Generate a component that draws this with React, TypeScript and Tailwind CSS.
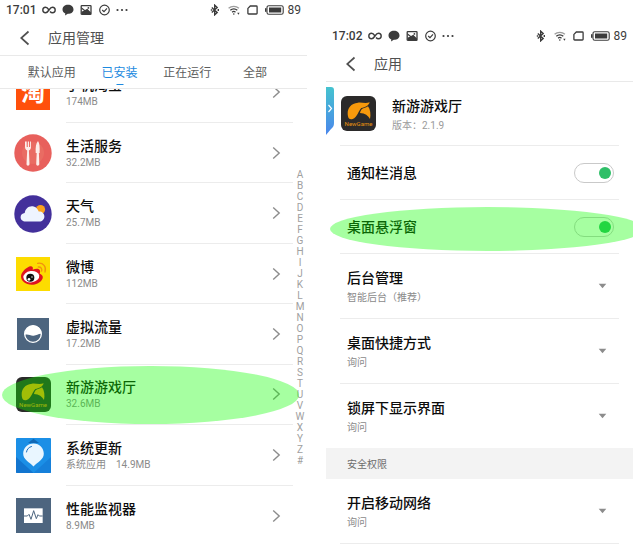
import type { ReactNode } from "react";

const FONT = "font-['Roboto','Noto_Sans_CJK_SC',sans-serif]";

function StatusBar({ time }: { time: string }) {
  return (
    <div className="flex h-5 items-center justify-between px-1.5 text-[12px] leading-5 text-[#3c3c3c]">
      <div className="flex items-center gap-1.5">
        <span className="w-[30px] font-medium">{time}</span>
        <svg width="14" height="10" viewBox="0 0 14 10" fill="none" stroke="currentColor" strokeWidth="1.4">
          <path d="M7 5C5.800 3.200 4.900 2.200 3.600 2.200a2.800 2.800 0 0 0 0 5.600C5 7.800 5.900 6.700 7 5s2-2.800 3.400-2.800a2.800 2.800 0 0 1 0 5.600c-1 0-1.700-.5-2.400-1.300" />
        </svg>
        <svg width="12" height="12" viewBox="0 0 12 12" fill="currentColor">
          <path d="M6 .8C2.900.8.5 2.800.5 5.400.5 7.200 1.600 8.700 3.300 9.400L3 11.600l2.800-1.800H6c3.100 0 5.500-1.900 5.500-4.400S9.100.8 6 .8Z" />
        </svg>
        <svg width="12" height="12" viewBox="0 0 12 12">
          <rect x="1.200" y="1.700" width="9.800" height="8.600" rx=".6" fill="none" stroke="currentColor" strokeWidth="1.300" />
          <path d="M1.500 3.200 5 6l2.300-1.200L11 8.500V10H1.500V7.800L4 6.600 1.500 5Z" fill="currentColor" />
          <circle cx="8.400" cy="3.900" r=".9" fill="currentColor" />
        </svg>
        <svg width="12" height="12" viewBox="0 0 12 12" fill="none" stroke="currentColor" strokeWidth="1.200">
          <circle cx="6.500" cy="6" r="4.800" />
          <path d="m4.200 6 1.800 1.700 3-3.300" />
        </svg>
        <svg width="12" height="12" viewBox="0 0 12 12" fill="currentColor">
          <circle cx="1.500" cy="6" r="1.100" />
          <circle cx="6" cy="6" r="1.100" />
          <circle cx="10.500" cy="6" r="1.100" />
        </svg>
      </div>
      <div className="flex items-center gap-[7px]">
        <svg width="11" height="12" viewBox="0 0 11 12" fill="none" stroke="currentColor" strokeWidth="1.400">
          <path d="m1.800 3.400 5.400 5L4.700 10.800V1.200l2.500 2.400-5.400 5" />
          <path d="M8.300 4.900v2.200M.8 6h1.400" />
        </svg>
        <svg width="12" height="12" viewBox="0 0 12 12" fill="none" stroke="currentColor" strokeWidth="1.300">
          <path d="M.6 4.300C3.500 1.600 8 1.600 10.900 4.300" opacity=".5" />
          <path d="M2.300 6.300c2-1.800 5-1.800 7 0" />
          <path d="M4.100 8.200c1-.9 2.400-.9 3.400 0" />
          <circle cx="5.800" cy="10" r=".8" fill="currentColor" stroke="none" />
          <path d="m9.200 8.800 1.200 1.900 1.200-1.900Z" fill="currentColor" stroke="none" />
        </svg>
        <svg width="11" height="12" viewBox="0 0 11 12" fill="none" stroke="currentColor" strokeWidth="1.300">
          <path d="M3.300 2h6c.5 0 .8.3.8.8v6.400c0 .5-.3.8-.8.8H1.700c-.5 0-.8-.3-.8-.8V4.400Z" />
        </svg>
        <div className="flex items-center gap-1">
          <svg width="19" height="12" viewBox="0 0 19 12">
            <rect x="2" y="1.700" width="16.200" height="8.600" rx="1.800" fill="none" stroke="currentColor" strokeWidth="1.100" />
            <rect x="4" y="3.500" width="12.200" height="5" fill="currentColor" />
            <rect x="0" y="4.200" width="1.500" height="3.600" fill="currentColor" />
          </svg>
          <span>89</span>
        </div>
      </div>
    </div>
  );
}

function TitleBar({ title }: { title: string }) {
  return (
    <header className="flex h-9 items-center gap-4 border-b border-[#e9e9e9] pl-5 text-[#505050]">
      <button type="button" aria-label="返回" className="w-3">
        <svg width="12" height="16" viewBox="0 0 12 16" fill="none" stroke="currentColor" strokeWidth="1.700">
          <path d="M8.500 1.500 1.200 8l7.300 6.500" />
        </svg>
      </button>
      <h1 className="text-[14px] leading-5">{title}</h1>
    </header>
  );
}

function NewGameIcon() {
  return (
    <div className="flex size-[35px] flex-col items-center rounded-md bg-[#2b2a2a] pt-1.5">
      <svg width="24" height="18" viewBox="19 18 72 54" className="shrink-0">
        <g fill="#f7990c">
          <path d="M22 61C18 43 26 22 52 20c12-1 23 3 35-1-3 11-14 15-25 17-9 9-12 28-26 33-8 2-13-1-14-8Z" />
          <path d="M65 38c7-2 13-4 17-7 7 9 9 24 6 38-5-10-15-17-30-18 1-5 3-10 7-13Z" />
        </g>
      </svg>
      <span className="text-[6px] leading-2 text-[#e8920f]">NewGame</span>
    </div>
  );
}

function TaobaoIcon() {
  return (
    <div className="flex size-[34px] items-center justify-center bg-[#ff500b] text-[24px] leading-8 font-bold text-white">
      淘
    </div>
  );
}

function LifeIcon() {
  return (
    <svg width="38" height="38" viewBox="0 0 38 38">
      <circle cx="19" cy="19" r="18.700" fill="#e8605c" />
      <circle cx="19" cy="19" r="11" fill="#ea7568" opacity=".6" />
      <path
        d="M11 7.500v5.500c0 2 1 3 2.200 3.500L12.500 30c0 2.200 3 2.200 3 0l-.6-13.500c1.200-.5 2.100-1.500 2.100-3.500V7.500h-.9V13h-1.100V7.500h-1.200V13h-1.100V7.500Z"
        fill="#fdeeea"
      />
      <path d="M24 7c-2 2-2.600 6-2.300 12h1L22.200 30c0 2.200 3.100 2.200 3.100 0l-.4-11h.7C25.900 13 25.600 9 24 7Z" fill="#fdeeea" />
    </svg>
  );
}

function WeatherIcon() {
  return (
    <svg width="38" height="38" viewBox="0 0 38 38">
      <circle cx="19" cy="19" r="18.700" fill="#43309b" />
      <circle cx="26.500" cy="14.500" r="4.600" fill="#f9a11d" />
      <path
        d="M11.500 26.500C8.700 26.500 6.600 24.600 6.600 22.200c0-2.300 1.800-4 4.100-4.200.5-3.900 3.400-6.800 7.100-6.800 3.300 0 5.900 2.200 6.900 5.400 3.200-.3 5.700 1.900 5.700 4.900 0 2.900-2.200 5-5 5Z"
        fill="#eef4ff"
      />
    </svg>
  );
}

function WeiboIcon() {
  return (
    <svg width="34" height="34" viewBox="0 0 102 102">
      <rect width="102" height="102" fill="#fddc00" />
      <path
        d="M15 58c0-12 18-29 29-30 6 0 8 4 6 10 9-4 20-5 22 3 1 3 0 6-1 9 22 8 2 33-24 33-18 0-32-10-32-25Z"
        fill="#df1420"
      />
      <ellipse cx="46" cy="59" rx="24" ry="17" fill="#fff" transform="rotate(-8 46 59)" />
      <circle cx="43" cy="62" r="12" fill="#111" />
      <circle cx="39" cy="67" r="4" fill="#fff" />
      <circle cx="48" cy="60" r="2" fill="#fff" />
      <path d="M65 19c17-3 27 11 22 26M67 30c8-1 12 6 10 12" fill="none" stroke="#f2930e" strokeWidth="4" strokeLinecap="round" />
    </svg>
  );
}

function DataIcon() {
  return (
    <svg width="32" height="32" viewBox="0 0 96 96">
      <rect width="96" height="96" fill="#4d657f" />
      <circle cx="48" cy="48" r="25" fill="none" stroke="#fff" strokeWidth="4" />
      <path d="M23 51c10-4 17 3 27 2 9-1 15-7 23-6C73 14 23 14 23 51Z" fill="#fff" />
    </svg>
  );
}

function UpdateIcon() {
  return (
    <svg width="35" height="35" viewBox="0 0 35 35">
      <rect width="35" height="35" rx="1" fill="#1b8fe6" />
      <path d="M0 19 17.500 35H1a1 1 0 0 1-1-1Z" fill="#1275cf" />
      <path d="M35 19 17.500 35H34a1 1 0 0 0 1-1Z" fill="#1680da" />
      <path d="M12 5 17.500.8 23 5Z" fill="#1168b5" />
      <path d="M17.500 5.500c6 0 10.300 4.500 10.300 10.300 0 5.700-5.800 8.200-10.300 12.700-4.500-4.500-10.300-7-10.300-12.700C7.200 10 11.500 5.500 17.500 5.500Z" fill="#e9f6ff" />
      <path d="M10.500 14c.5-2.800 2.200-4.800 5-5.500" fill="none" stroke="#1b6fc0" strokeWidth="1" strokeLinecap="round" />
    </svg>
  );
}

function MonitorIcon() {
  return (
    <svg width="35" height="35" viewBox="0 0 105 105">
      <rect width="105" height="105" fill="#4d657f" />
      <rect x="24" y="31" width="56" height="44" fill="#fff" />
      <path d="M24 54h10l5-5 6 15 8-26 8 24 5-12 4 4h10" fill="none" stroke="#4d657f" strokeWidth="3" />
    </svg>
  );
}

type AppItem = { name: string; size: string; kind?: string; icon: ReactNode; marked?: boolean };

const apps: AppItem[] = [
  { name: "生活服务", size: "32.2MB", icon: <LifeIcon /> },
  { name: "天气", size: "25.7MB", icon: <WeatherIcon /> },
  { name: "微博", size: "112MB", icon: <WeiboIcon /> },
  { name: "虚拟流量", size: "17.2MB", icon: <DataIcon /> },
  { name: "新游游戏厅", size: "32.6MB", icon: <NewGameIcon />, marked: true },
  { name: "系统更新", size: "14.9MB", kind: "系统应用", icon: <UpdateIcon /> },
  { name: "性能监视器", size: "8.9MB", icon: <MonitorIcon /> },
];

function AppRow({ app, last }: { app: AppItem; last?: boolean }) {
  return (
    <button type="button" className="flex min-h-15 w-full flex-1 items-stretch text-left">
      <span className="flex w-[66px] shrink-0 items-center justify-center">{app.icon}</span>
      <span
        className={
          last
            ? "flex flex-1 items-center justify-between pr-3"
            : "flex flex-1 items-center justify-between border-b border-[#ececec] pr-3"
        }
      >
        <span className="flex flex-col pt-0.5">
          <span className="text-[14px] leading-[18px] font-medium text-[#0c0c0c]">{app.name}</span>
          <span className="flex gap-2.5 text-[10px] leading-4 text-[#8a8a8a]">
            {app.kind && <span>{app.kind}</span>}
            <span>{app.size}</span>
          </span>
        </span>
        <svg width="9" height="14" viewBox="0 0 9 14" fill="none" stroke="#8c8c8c" strokeWidth="1.400">
          <path d="m1.200 1.500 6 5.500-6 5.500" />
        </svg>
      </span>
    </button>
  );
}

const tabs = ["默认应用", "已安装", "正在运行", "全部"];
const letters = "ABCDEFGHIJKLMNOPQRSTUVWXYZ#".split("");

function ManagerScreen() {
  return (
    <section className="flex min-h-screen flex-col">
      <StatusBar time="17:01" />
      <TitleBar title="应用管理" />
      <nav className="grid h-[33px] grid-cols-4 border-b border-[#e9e9e9] px-[18px] text-[12px] leading-5">
        {tabs.map((tab) =>
          tab === "已安装" ? (
            <button key={tab} type="button" className="relative pt-0.5 text-[#1c8ae0]">
              {tab}
              <span className="absolute bottom-[3px] left-1/2 h-px w-[7px] -translate-x-1/2 bg-[#1c8ae0]" />
            </button>
          ) : (
            <button key={tab} type="button" className="pt-0.5 text-[#5c5c5c]">
              {tab}
            </button>
          ),
        )}
      </nav>
      <div className="flex flex-1">
        <div className="flex flex-1 flex-col">
          <div className="flex h-[34px] flex-col justify-end overflow-hidden">
            <div className="flex h-[61px] shrink-0 flex-col">
              <AppRow app={{ name: "手机淘宝", size: "174MB", icon: <TaobaoIcon /> }} />
            </div>
          </div>
          {apps.map((app, index) => (
            <div key={app.name} className="relative flex flex-1 flex-col">
              <AppRow app={app} last={index === apps.length - 1} />
              {app.marked && (
                <span className="pointer-events-none absolute inset-y-px -right-1.5 left-0.5 rounded-[50%] bg-[rgba(13,255,0,0.37)]" />
              )}
            </div>
          ))}
        </div>
        <ol className="w-[14px] pt-20 text-center text-[10px] leading-[11px] text-[#a0a0a0]">
          {letters.map((letter) => (
            <li key={letter}>{letter}</li>
          ))}
        </ol>
      </div>
    </section>
  );
}

function SwitchRow({ label, marked }: { label: string; marked?: boolean }) {
  return (
    <div className="relative px-[14px]">
      <label className="flex h-[54px] items-center justify-between border-b border-[#ececec] pr-[5px] pl-[7px]">
        <span className="text-[14px] leading-5 font-medium text-[#0c0c0c]">{label}</span>
        <input
          type="checkbox"
          role="switch"
          defaultChecked
          className="h-5 w-10 appearance-none rounded-full border border-[#c9c9c9] bg-white outline-none before:mt-[3px] before:ml-1 before:block before:size-3 before:rounded-full before:bg-[#bdbdbd] checked:before:ml-6 checked:before:bg-[#2fbf68]"
        />
      </label>
      {marked && (
        <span className="pointer-events-none absolute inset-0 overflow-hidden">
          <span className="absolute top-[7px] -right-[11px] bottom-[3px] left-1 rounded-[50%] bg-[rgba(13,255,0,0.37)]" />
        </span>
      )}
    </div>
  );
}

function SelectRow({ id, label, value, options, last }: { id: string; label: string; value: string; options: string[]; last?: boolean }) {
  return (
    <div className="px-[14px]">
      <div className={last ? "flex h-16 items-center pr-3 pl-[7px]" : "flex h-[65px] items-center border-b border-[#ececec] pr-3 pl-[7px]"}>
        <div className="flex flex-1 flex-col pt-1">
          <label htmlFor={id} className="text-[14px] leading-5 font-medium text-[#0c0c0c]">
            {label}
          </label>
          <select id={id} defaultValue={value} className="h-5 w-full appearance-none bg-transparent p-0 text-[10px] leading-5 text-[#8a8a8a]">
            {options.map((option) => (
              <option key={option}>{option}</option>
            ))}
          </select>
        </div>
        <svg width="9" height="6" viewBox="0 0 9 6" fill="#8c8c8c">
          <path d="M.7.8h7.600L4.500 5.200Z" />
        </svg>
      </div>
    </div>
  );
}

const askOptions = ["询问", "允许", "禁止"];

function DetailScreen() {
  return (
    <section className="pt-[26px]">
      <StatusBar time="17:02" />
      <TitleBar title="应用" />
      <div className="relative px-[14px]">
        <button type="button" aria-label="展开侧栏" className="absolute top-[5px] left-0">
          <svg width="8" height="48" viewBox="0 0 8 48" className="block">
            <defs>
              <linearGradient id="side" x1="0" y1="0" x2="0" y2="1">
                <stop offset="0" stopColor="#45c3cf" />
                <stop offset="1" stopColor="#4a86ec" />
              </linearGradient>
            </defs>
            <path d="M0 0h5a3 3 0 0 1 3 3v33c0 3-1 4-3 6l-5 6Z" fill="url(#side)" />
            <path d="m2.500 18 3 3.500-3 3.500" fill="none" stroke="#fff" strokeWidth="1.200" />
          </svg>
        </button>
        <div className="flex h-16 items-center gap-4 border-b border-[#ececec] pl-px">
          <NewGameIcon />
          <div className="pt-1">
            <h2 className="text-[14px] leading-5 font-medium text-[#0c0c0c]">新游游戏厅</h2>
            <p className="text-[10px] leading-5 text-[#9a9a9a]">版本：2.1.9</p>
          </div>
        </div>
      </div>
      <SwitchRow label="通知栏消息" />
      <SwitchRow label="桌面悬浮窗" marked />
      <SelectRow id="background" label="后台管理" value="智能后台（推荐）" options={["智能后台（推荐）", "允许后台运行", "禁止后台运行"]} />
      <SelectRow id="shortcut" label="桌面快捷方式" value="询问" options={askOptions} />
      <SelectRow id="lockscreen" label="锁屏下显示界面" value="询问" options={askOptions} last />
      <h3 className="bg-[#f3f3f3] pt-2 pb-[5px] pl-[21px] text-[10px] leading-[18px] text-[#6c6c6c]">安全权限</h3>
      <SelectRow id="network" label="开启移动网络" value="询问" options={askOptions} />
    </section>
  );
}

export default function App() {
  return (
    <main className={`grid grid-cols-2 gap-[19px] overflow-hidden bg-white pr-[7px] ${FONT}`}>
      <ManagerScreen />
      <DetailScreen />
    </main>
  );
}
